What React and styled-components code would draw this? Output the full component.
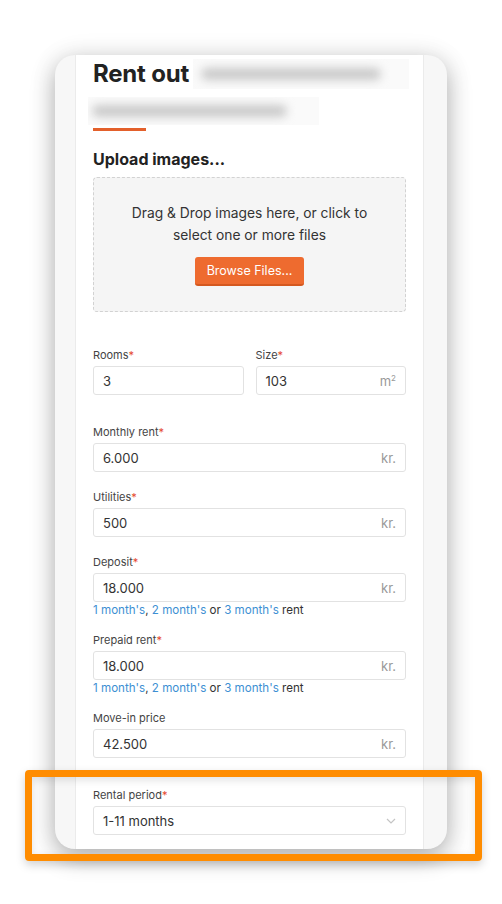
import React from 'react'
import styled, { createGlobalStyle } from 'styled-components'

const GlobalStyle = createGlobalStyle`
  html, body {
    margin: 0;
    padding: 0;
    background: #ffffff;
    font-family: Inter, "Noto Sans", "Liberation Sans", sans-serif;
    color: #333;
  }
  * {
    box-sizing: border-box;
  }
`

const Stage = styled.div`
  position: relative;
  width: 502px;
  height: 904px;
  padding: 55px 0 0 55px;
  overflow: hidden;
`

const Device = styled.div`
  width: 392px;
  height: 794px;
  border-radius: 20px;
  background: #f7f7f7;
  overflow: hidden;
  box-shadow: 0 8px 24px rgba(0, 0, 0, 0.3), 0 0 30px rgba(0, 0, 0, 0.06);
  padding-left: 20px;
`

const Column = styled.div`
  width: 349px;
  height: 100%;
  background: #fff;
  border-left: 1px solid #ebebeb;
  border-right: 1px solid #ebebeb;
  padding: 2px 17px 0;
`

const Title = styled.h1`
  margin: 0;
  font-size: 24px;
  line-height: 34px;
  font-weight: 700;
  color: #222;
  letter-spacing: -0.2px;
`

const TitleLine = styled.div`
  display: flex;
  align-items: center;
  white-space: nowrap;
  height: 34px;
`

const Redacted = styled.span`
  display: flex;
  flex: none;
  align-items: center;
  width: ${p => p.$w}px;
  height: ${p => p.$h}px;
  margin-left: ${p => p.$ml}px;
  margin-top: ${p => p.$mt || 0}px;
  background: #fafafa;
  overflow: hidden;

  &::before {
    content: '';
    display: block;
    margin-left: ${p => p.$pad}px;
    width: ${p => p.$blob}px;
    height: 12px;
    border-radius: 6px;
    background: #c9c9c9;
    filter: blur(5px);
  }
`

const Accent = styled.div`
  width: 53px;
  height: 3px;
  margin-top: 3px;
  background: #e3602b;
`

const SectionTitle = styled.h2`
  margin: 18px 0 0;
  font-size: 16px;
  line-height: 20px;
  font-weight: 700;
  color: #222;
`

const DropZone = styled.div`
  margin-top: 8px;
  height: 135px;
  border: 1px dashed #d2d2d2;
  border-radius: 4px;
  background: #f5f5f5;
  padding: 24px 20px 0;
  display: flex;
  flex-direction: column;
  align-items: center;
  text-align: center;

  p {
    margin: 0;
    font-size: 13.8px;
    line-height: 22px;
    color: #333;
  }
`

const BrowseButton = styled.button`
  margin-top: 11px;
  height: 29px;
  padding: 0 12px;
  border: none;
  border-bottom: 2px solid #d4581f;
  border-radius: 3px;
  background: #ee6b2f;
  color: #fff;
  font-family: inherit;
  font-size: 12.5px;
  line-height: 27px;
`

const Form = styled.div`
  margin-top: 36px;
`

const Row = styled.div`
  display: grid;
  grid-template-columns: 1fr 1fr;
  column-gap: 12px;

  & > div {
    margin-top: 0;
  }
`

const Field = styled.div`
  margin-top: ${p => (p.$section ? 30 : p.$afterHint ? 15 : 18)}px;
`

const Label = styled.div`
  font-size: 11px;
  line-height: 14px;
  color: #444;
  margin-bottom: 4px;

  span {
    color: #e5472d;
  }
`

const InputBox = styled.div`
  height: 29px;
  border: 1px solid #e2e2e2;
  border-radius: 3px;
  background: #fff;
  display: flex;
  align-items: center;
  justify-content: space-between;
  padding: 0 9px;
  font-size: 13px;
  color: #333;
`

const Unit = styled.span`
  color: #999;
  font-size: 13px;

  sup {
    font-size: 8px;
    vertical-align: 5px;
  }
`

const Hint = styled.div`
  font-size: 11.6px;
  line-height: 16px;
  color: #333;

  a {
    color: #3d8fd3;
    text-decoration: none;
  }
`

const Highlight = styled.div`
  position: absolute;
  left: 25px;
  top: 770px;
  width: 457px;
  height: 91px;
  border: 7px solid #ff8c00;
  border-radius: 4px;
  box-shadow: 0 4px 10px rgba(0, 0, 0, 0.18), inset 0 3px 8px rgba(0, 0, 0, 0.12);
  pointer-events: none;
`

const Chevron = () => (
  <svg width="10" height="6" viewBox="0 0 10 6">
    <polyline points="1,1 5,5 9,1" fill="none" stroke="#c4c4c4" strokeWidth="1.2" />
  </svg>
)

const Required = () => <span>*</span>

const RentHint = () => (
  <Hint>
    <a href="#">1 month's</a>, <a href="#">2 month's</a> or <a href="#">3 month's</a> rent
  </Hint>
)

class App extends React.Component {
  render() {
    return (
      <Stage>
        <GlobalStyle />
        <Device>
          <Column>
            <Title>
              <TitleLine>
                Rent out
                <Redacted $w={216} $h={30} $ml={4} $pad={8} $blob={180} />
              </TitleLine>
              <TitleLine>
                <Redacted $w={231} $h={28} $ml={-5} $mt={6} $pad={4} $blob={195} />
              </TitleLine>
            </Title>
            <Accent />
            <SectionTitle>Upload images...</SectionTitle>
            <DropZone>
              <p>Drag &amp; Drop images here, or click to<br />select one or more files</p>
              <BrowseButton>Browse Files...</BrowseButton>
            </DropZone>

            <Form>
              <Row>
                <Field>
                  <Label>Rooms<Required /></Label>
                  <InputBox>3</InputBox>
                </Field>
                <Field>
                  <Label>Size<Required /></Label>
                  <InputBox>103<Unit>m<sup>2</sup></Unit></InputBox>
                </Field>
              </Row>

              <Field $section>
                <Label>Monthly rent<Required /></Label>
                <InputBox>6.000<Unit>kr.</Unit></InputBox>
              </Field>
              <Field>
                <Label>Utilities<Required /></Label>
                <InputBox>500<Unit>kr.</Unit></InputBox>
              </Field>
              <Field>
                <Label>Deposit<Required /></Label>
                <InputBox>18.000<Unit>kr.</Unit></InputBox>
                <RentHint />
              </Field>
              <Field $afterHint>
                <Label>Prepaid rent<Required /></Label>
                <InputBox>18.000<Unit>kr.</Unit></InputBox>
                <RentHint />
              </Field>
              <Field $afterHint>
                <Label>Move-in price</Label>
                <InputBox>42.500<Unit>kr.</Unit></InputBox>
              </Field>

              <Field $section>
                <Label>Rental period<Required /></Label>
                <InputBox>1-11 months<Chevron /></InputBox>
              </Field>
            </Form>
          </Column>
        </Device>
        <Highlight />
      </Stage>
    )
  }
}

export default App
